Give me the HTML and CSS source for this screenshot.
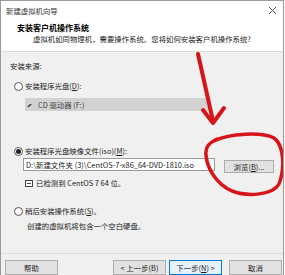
FILE: index.html
```html
<!DOCTYPE html>
<html lang="zh-CN">
<head>
    <meta charset="UTF-8">
    <title>新建虚拟机向导</title>
    <link rel="stylesheet" href="styles.css">
</head>
<body>

    <div class="window">
        <div class="titlebar">
            <span>新建虚拟机向导</span>
            <svg class="close" width="9" height="9" viewBox="0 0 9 9">
                <path d="M1 1 L8 8 M8 1 L1 8" stroke="#555" stroke-width="1"/>
            </svg>
        </div>

        <div class="header">
            <div class="heading">安装客户机操作系统</div>
            <div class="subtitle">虚拟机如同物理机，需要操作系统。您将如何安装客户机操作系统?</div>
        </div>

        <div class="content">
            <div class="group-label">安装来源:</div>

            <div class="option opt-disc"><span class="radio"></span>安装程序光盘(<u>D</u>):</div>
            <div class="select">
                <svg width="8" height="6" viewBox="0 0 8 6">
                    <path d="M0 5 L3 2 L5 2 L2 5 Z" fill="#333"/>
                </svg>
                CD 驱动器 (F:)
            </div>

            <div class="option opt-iso"><span class="radio checked"></span>安装程序光盘映像文件(iso)(<u>M</u>):</div>
            <div class="iso-row">
                <div class="input">D:\新建文件夹 (3)\CentOS-7-x86_64-DVD-1810.iso</div>
                <div class="btn browse">浏览(<u>B</u>)...</div>
            </div>
            <div class="detected">
                <svg width="8" height="7" viewBox="0 0 8 7">
                    <rect x="0.5" y="0.5" width="7" height="6" fill="#fff" stroke="#444"/>
                    <path d="M2 3.5 H6" stroke="#444"/>
                </svg>
                已检测到 CentOS 7 64 位。
            </div>

            <div class="option opt-later"><span class="radio"></span>稍后安装操作系统(<u>S</u>)。</div>
            <div class="desc">创建的虚拟机将包含一个空白硬盘。</div>
        </div>

        <div class="footer">
            <div class="btn">帮助</div>
            <div class="spacer"></div>
            <div class="btn">&lt; 上一步(B)</div>
            <div class="btn primary">下一步(<u>N</u>) &gt;</div>
            <div class="btn cancel">取消</div>
        </div>

        <!-- red marks drawn over the dialog -->
        <svg class="marks" width="285" height="275" viewBox="0 0 285 275">
            <g fill="none" stroke="#d7141a" stroke-linecap="round" stroke-linejoin="round">
                <path d="M198 54 L213 121" stroke-width="4"/>
                <path d="M203 110 L213 123 L224 108" stroke-width="4"/>
                <path d="M214 141 C230 133 262 132 274 138 C284 145 285 168 279 184 C273 195 248 197 232 191 C216 184 207 168 206 155 C205 147 209 143 217 139" stroke-width="3.5"/>
            </g>
        </svg>
    </div>

</body>
</html>
```

FILE: styles.css
```css
body {
    margin: 0;
    padding: 0;
    background-color: #ffffff;
    font-family: "Noto Sans CJK SC", "Noto Sans", sans-serif;
    font-size: 7.4px;
    color: #1a1a1a;
}

.window {
    position: relative;
    width: 282px;
    height: 274px;
    border: 1px solid #9a9a9a;
    border-bottom: none;
    background-color: #f0f0f0;
    overflow: hidden;
}

.titlebar {
    height: 20px;
    line-height: 20px;
    padding-left: 5px;
    padding-right: 6px;
    background-color: #ffffff;
    display: flex;
    justify-content: space-between;
    align-items: center;
    color: #333;
}

.close {
    margin-top: -2px;
}

.header {
    background-color: #ffffff;
    padding: 2px 0 7px 0;
    border-bottom: 1px solid #dcdcdc;
}

.heading {
    line-height: 10px;
    padding-left: 16px;
    font-size: 8px;
    font-weight: bold;
    color: #000;
}

.subtitle {
    line-height: 10px;
    margin-top: 1px;
    padding-left: 32px;
    color: #222;
}

.content {
    padding: 9px 0 22px 0;
    line-height: 10px;
}

.group-label {
    padding-left: 9px;
}

.option {
    display: flex;
    align-items: center;
    padding-left: 13px;
}

.opt-disc {
    margin-top: 10px;
}

.opt-iso {
    margin-top: 35px;
}

.opt-later {
    margin-top: 18px;
}

.radio {
    width: 7px;
    height: 7px;
    border: 1px solid #555;
    border-radius: 50%;
    background-color: #fff;
    margin-right: 2px;
    box-sizing: content-box;
    position: relative;
}

.radio.checked::after {
    content: "";
    position: absolute;
    left: 1px;
    top: 1px;
    width: 5px;
    height: 5px;
    border-radius: 50%;
    background-color: #222;
}

.select {
    margin: 7px 0 0 24px;
    width: 185px;
    height: 13px;
    line-height: 13px;
    background-color: #d2d2d2;
    display: flex;
    align-items: center;
    gap: 3px;
    padding-left: 2px;
    box-sizing: border-box;
    color: #444;
}

.iso-row {
    display: flex;
    align-items: flex-start;
    margin-top: 2px;
    padding-left: 22px;
}

.input {
    width: 192px;
    height: 13px;
    line-height: 11px;
    border: 1px solid #9a9a9a;
    background-color: #ffffff;
    padding-left: 2px;
    box-sizing: border-box;
    white-space: nowrap;
    overflow: hidden;
}

.btn {
    width: 53px;
    height: 15px;
    line-height: 13px;
    border: 1px solid #adadad;
    background-color: #e1e1e1;
    text-align: center;
    box-sizing: border-box;
}

.browse {
    width: 50px;
    height: 13px;
    line-height: 11px;
    margin: 2px 0 0 9px;
}

.detected {
    display: flex;
    align-items: center;
    gap: 3px;
    margin-top: 5px;
    padding-left: 24px;
}

.desc {
    margin-top: 5px;
    padding-left: 26px;
}

.footer {
    border-top: 1px solid #dcdcdc;
    padding: 6px 0 0 4px;
    display: flex;
    gap: 3px;
}

.spacer {
    width: 49px;
}

.primary {
    border-color: #0078d7;
    background-color: #e5f1fb;
}

.cancel {
    margin-left: 4px;
}

.marks {
    position: absolute;
    left: -1px;
    top: -1px;
    pointer-events: none;
}
```
